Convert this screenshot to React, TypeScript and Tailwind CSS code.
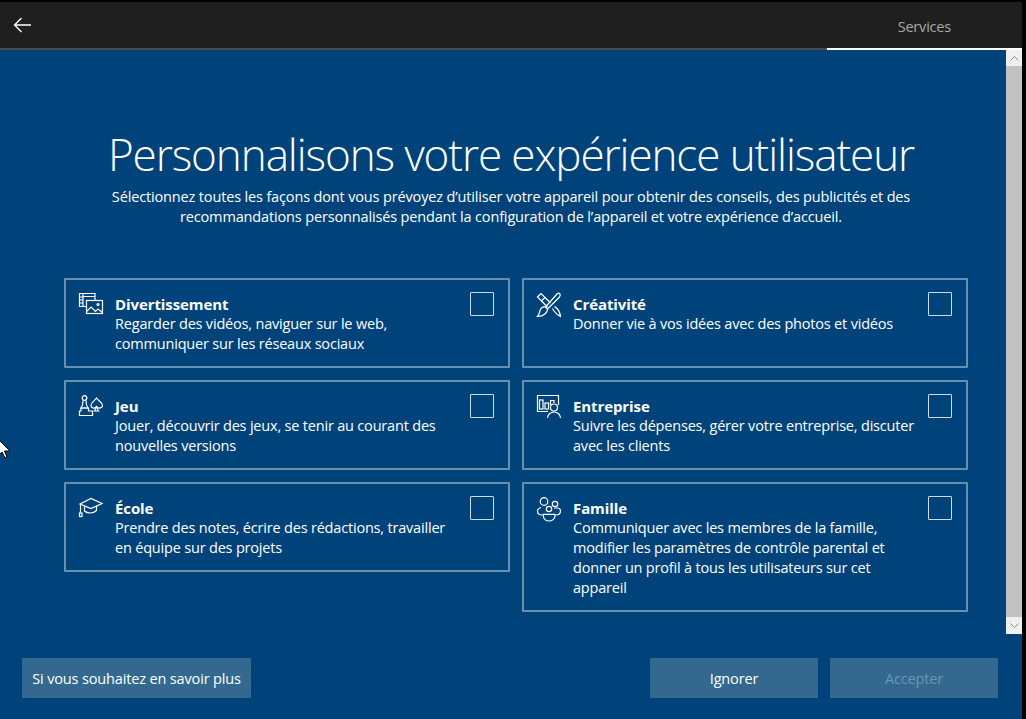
const font = "font-['Open_Sans','Noto_Sans',sans-serif]";

function IconEntertainment() {
  return (
    <svg width="26" height="26" viewBox="0 0 26 26" fill="none" stroke="white" strokeWidth="1.2">
      <path d="M8 14.5H1.5V1.5H17V8.5" />
      <path d="M5 4.5H17M5 1.5V14.5M1.5 5H5M1.5 8H5M1.5 11H5" />
      <rect x="8.5" y="8.5" width="16" height="13" />
      <path d="M8.5 19.5L13 15L17.5 19.5L20 17L24.5 20.5" />
      <circle cx="20" cy="12.5" r="1" />
    </svg>
  );
}

function IconGame() {
  return (
    <svg width="26" height="26" viewBox="0 0 26 26" fill="none" stroke="white" strokeWidth="1.2">
      <circle cx="6.5" cy="4" r="2.3" />
      <path d="M5 6.5C5 10 4.5 12 3 14H10C8.5 12 8 10 8 6.5" />
      <path d="M3 14H10.5V17H14.5V21.5H1.5V17H3Z" />
      <path d="M18.5 4C16.5 7 13 8.5 13 11.5C13 14 16 15 18 13C18 14.5 17.5 16 16.5 17H20.5C19.5 16 19 14.5 19 13C21 15 24.5 14 24.5 11.5C24.5 8.5 20.5 7 18.5 4Z" />
    </svg>
  );
}

function IconSchool() {
  return (
    <svg width="26" height="26" viewBox="0 0 26 26" fill="none" stroke="white" strokeWidth="1.2">
      <path d="M2 8L13 2.5L24 7.5L13 12.5L2 8Z" />
      <path d="M6.5 10.5V15C9 17.5 15 18 18.5 14.5V10" />
      <path d="M2.5 8.5V16.5" />
      <rect x="1.5" y="17" width="2.5" height="3.5" />
    </svg>
  );
}

function IconCreativity() {
  return (
    <svg width="26" height="26" viewBox="0 0 26 26" fill="none" stroke="white" strokeWidth="1.2">
      <path d="M1.5 5L5 1.5L9 5.5L5.5 9Z" />
      <path d="M9 5.5L14.5 11M5.5 9L11.5 15" />
      <path d="M16.5 16.5L18 19C19.5 21 21 23 24.5 24.5C24 21 23.5 19 21.5 17L18.5 14.5" />
      <path d="M23.5 1.5C24.5 2.5 24.5 3.5 23.5 5L11.5 17C11.5 20.5 8 24.5 1.5 24.5C4.5 21.5 3 18 5.5 16C6.5 15 8 14.5 9.5 15L21 2C22 1 23 1 23.5 1.5Z" />
      <path d="M9.5 15L11.5 17" />
    </svg>
  );
}

function IconBusiness() {
  return (
    <svg width="26" height="26" viewBox="0 0 26 26" fill="none" stroke="white" strokeWidth="1.2">
      <path d="M12 17.5H1.5V1.5H22.5V11" />
      <rect x="3.5" y="6" width="3.5" height="9" />
      <rect x="9" y="9" width="3.5" height="6" />
      <path d="M14.5 11V6.5H18V9" />
      <circle cx="18" cy="13.5" r="3.5" />
      <path d="M11.5 24C11.5 20.5 14.5 18 18 18C21.5 18 24.5 20.5 24.5 24" />
    </svg>
  );
}

function IconFamily() {
  return (
    <svg width="26" height="26" viewBox="0 0 26 26" fill="none" stroke="white" strokeWidth="1.2">
      <circle cx="8" cy="5.5" r="3.8" />
      <circle cx="19" cy="8" r="2.7" />
      <circle cx="13" cy="13" r="2.7" />
      <path d="M5 11.5C3 12 1.5 13.5 1.5 15.5C1.5 17.5 3.5 19 6.5 19" />
      <path d="M18 12H21.5C23.5 12 24.5 13.5 24.5 15C24.5 17.5 22.5 19 19.5 19" />
      <path d="M7.3 18.3H19V20C19 23 16 25 13 25C10 25 7.3 23 7.3 20V18.3Z" />
    </svg>
  );
}

function Card({
  icon,
  title,
  lines,
  className = "",
}: {
  icon: React.ReactNode;
  title: string;
  lines: string[];
  className?: string;
}) {
  return (
    <div className={`flex border-2 border-[#668fb0] rounded-[1px] pl-3 pt-3 pr-[14px] min-h-[90px] ${className}`}>
      <div className="w-[37px] shrink-0">{icon}</div>
      <div className="flex-1 pt-[2px]">
        <div className="text-[15px] leading-5 font-bold text-white tracking-[-0.1px]">{title}</div>
        {lines.map((line) => (
          <div key={line} className="text-[14.5px] leading-5 text-white tracking-[-0.19px] whitespace-nowrap">
            {line}
          </div>
        ))}
      </div>
      <div className="w-6 h-6 border border-[#cfdbe6] shrink-0 rounded-[1px]" />
    </div>
  );
}

export default function App() {
  return (
    <div className={`${font} flex w-[1026px] h-[719px] overflow-hidden bg-black pt-[2px]`}>
      <div className="flex flex-col w-[1022px] bg-[#00437a]">
        <header className="relative flex h-[48px] items-center justify-between bg-[#1f1f1f] border-b-2 border-[#4c4c4c]">
          <svg className="ml-[13px]" width="19" height="16" viewBox="0 0 19 16" fill="none" stroke="white" strokeWidth="1.3">
            <path d="M18 8H1.5M8.5 1L1.5 8L8.5 15" />
          </svg>
          <span className="mr-[71px] pt-[3px] text-[14.5px] text-[#a9a9a9] tracking-[-0.2px]">Services</span>
          <div className="absolute right-0 -bottom-[2px] w-[195px] h-[2px] bg-white" />
        </header>

        <div className="relative h-[584px] flex flex-col">
          <h1 className="mt-[72px] text-center text-[44px] leading-[64px] font-light text-white tracking-[-1.08px]">
            Personnalisons votre expérience utilisateur
          </h1>
          <p className="mt-[1px] text-center text-[14.5px] leading-[20px] text-white tracking-[-0.15px]">
            Sélectionnez toutes les façons dont vous prévoyez d’utiliser votre appareil pour obtenir des conseils, des publicités et des
            <br />
            recommandations personnalisés pendant la configuration de l’appareil et votre expérience d’accueil.
          </p>

          <div className="mt-[51px] ml-[64px] grid w-[904px] grid-cols-2 gap-3 items-start">
            <Card
              icon={<IconEntertainment />}
              title="Divertissement"
              lines={["Regarder des vidéos, naviguer sur le web,", "communiquer sur les réseaux sociaux"]}
            />
            <Card
              icon={<IconCreativity />}
              title="Créativité"
              lines={["Donner vie à vos idées avec des photos et vidéos"]}
            />
            <Card
              icon={<IconGame />}
              title="Jeu"
              lines={["Jouer, découvrir des jeux, se tenir au courant des", "nouvelles versions"]}
            />
            <Card
              icon={<IconBusiness />}
              title="Entreprise"
              lines={["Suivre les dépenses, gérer votre entreprise, discuter", "avec les clients"]}
            />
            <Card
              icon={<IconSchool />}
              title="École"
              lines={["Prendre des notes, écrire des rédactions, travailler", "en équipe sur des projets"]}
            />
            <Card
              icon={<IconFamily />}
              title="Famille"
              lines={[
                "Communiquer avec les membres de la famille,",
                "modifier les paramètres de contrôle parental et",
                "donner un profil à tous les utilisateurs sur cet",
                "appareil",
              ]}
              className="h-[130px]"
            />
          </div>

          <div className="absolute right-0 top-0 bottom-0 w-4 flex flex-col bg-[#c1c1c1]">
            <div className="h-4 bg-[#f0f0f0] flex items-center justify-center">
              <svg width="9" height="5" viewBox="0 0 9 5" fill="none" stroke="#8a8a8a">
                <path d="M0.5 4.5L4.5 0.5L8.5 4.5" />
              </svg>
            </div>
            <div className="flex-1" />
            <div className="h-[17px] bg-[#f0f0f0] flex items-center justify-center">
              <svg width="9" height="5" viewBox="0 0 9 5" fill="none" stroke="#8a8a8a">
                <path d="M0.5 0.5L4.5 4.5L8.5 0.5" />
              </svg>
            </div>
          </div>

          <svg className="absolute left-0 top-[390px]" width="11" height="20" viewBox="0 0 11 20">
            <path d="M-1 0L10 11H4.5L7 17L5 18L2 12L-1 15Z" fill="white" stroke="black" strokeWidth="1" />
          </svg>
        </div>

        <footer className="flex flex-1 items-start pt-[24px] pl-[22px] pr-[24px] text-[14.5px] tracking-[-0.15px]">
          <button className="h-10 w-[229px] pt-[1px] bg-[#33698f] text-white">Si vous souhaitez en savoir plus</button>
          <button className="ml-auto h-10 w-[168px] pt-[1px] bg-[#33698f] text-white">Ignorer</button>
          <button className="ml-3 h-10 w-[168px] pt-[1px] bg-[#33698f] text-[#6d96b3]">Accepter</button>
        </footer>
      </div>
      <div className="w-1 bg-black" />
    </div>
  );
}
